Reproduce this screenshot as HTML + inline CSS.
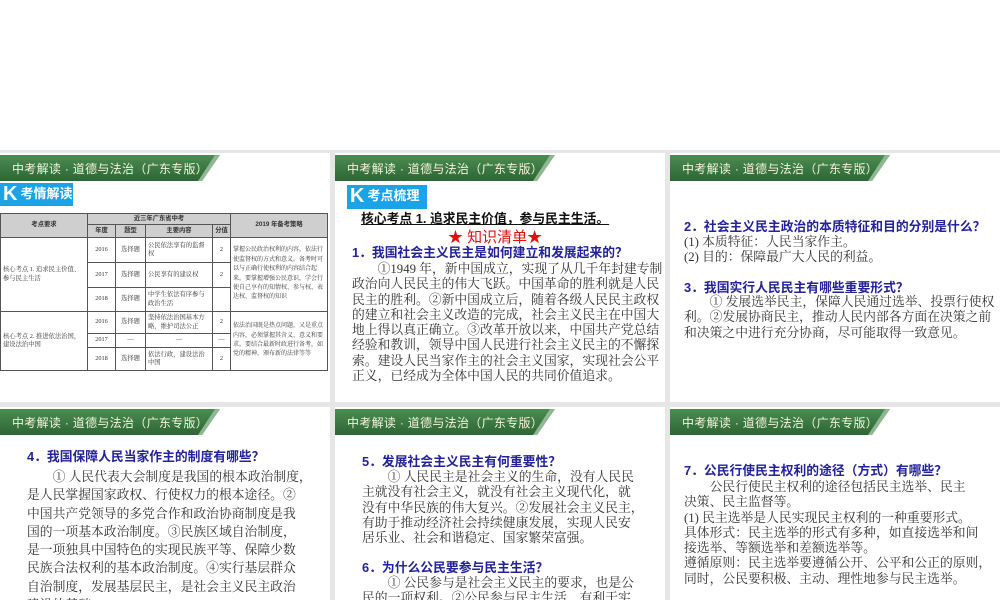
<!DOCTYPE html>
<html><head><meta charset="utf-8"><style>
*{margin:0;padding:0;box-sizing:border-box}
body{width:1000px;height:600px;overflow:hidden;background:#fff;position:relative;font-family:"Liberation Serif","Noto Serif CJK SC",serif;color:#333}
.bg{position:absolute;left:0;top:150px;width:1000px;height:450px;background:#e6e6e6}
.s{position:absolute;background:#fff;overflow:hidden}
.band{position:absolute;left:0;top:2px;width:222px;height:26px}
.band .t{position:absolute;left:12px;top:5px;font:12px "Liberation Sans","Noto Sans CJK SC",sans-serif;color:#f3f3dc;white-space:nowrap;letter-spacing:0.3px}
.k{position:absolute;background:#1aa3e6;color:#fff;font:bold 13px "Liberation Sans","Noto Sans CJK SC",sans-serif;white-space:nowrap;padding-left:3px}
.k b{font-size:20px;vertical-align:-2px;margin-right:3px}
.l{position:absolute;white-space:nowrap;font-size:12.8px;line-height:15.3px}
.q{color:#22229a;font-family:"Liberation Sans","Noto Sans CJK SC",sans-serif;font-weight:bold}
table{position:absolute;border-collapse:collapse;table-layout:fixed;font-size:6.3px;line-height:8.5px}
td{border:1px solid #555;padding:0 2px;vertical-align:middle;overflow:hidden}
.h td{background:#cfcfcf;text-align:center;font-weight:bold;font-family:"Liberation Sans","Noto Sans CJK SC",sans-serif}
.c{text-align:center}
.st{line-height:9.4px;font-size:6px}
</style></head><body>
<div class="bg"></div>

<div class="s" style="left:0;top:153px;width:330px;height:249px">
<svg class="band" viewBox="0 0 222 26"><defs><linearGradient id="g" x1="0" y1="0" x2="0" y2="1"><stop offset="0" stop-color="#4c8c52"/><stop offset="1" stop-color="#2c6634"/></linearGradient></defs><polygon points="0,0 220,0 202,26 0,26" fill="url(#g)"/><polygon points="215,0 220,0 202,26 198,26" fill="#8fb892"/></svg>
<div class="band"><div class="t">中考解读 · 道德与法治（广东专版）</div></div>
<div class="k" style="left:0;top:30px;width:73px;height:23px"><b>K</b>考情解读</div>
<table style="left:0;top:60px;width:327px">
<colgroup><col style="width:87px"><col style="width:28px"><col style="width:30px"><col style="width:67px"><col style="width:18px"><col style="width:97px"></colgroup>
<tr class="h" style="height:11px"><td rowspan="2">考点要求</td><td colspan="4">近三年广东省中考</td><td rowspan="2">2019 年备考策略</td></tr>
<tr class="h" style="height:13px"><td>年度</td><td>题型</td><td>主要内容</td><td style="padding:0">分值</td></tr>
<tr style="height:25px"><td rowspan="3">核心考点 1. 追求民主价值、参与民主生活</td><td class="c">2016</td><td class="c">选择题</td><td>公民依法享有的监督权</td><td class="c">2</td><td rowspan="3" class="st">掌握公民政治权利的内容，依法行使监督权的方式和意义。备考时可以与正确行使权利的内容结合起来。要掌握增强公民意识，学会行使自己享有的知情权、参与权、表达权、监督权的知识</td></tr>
<tr style="height:25px"><td class="c">2017</td><td class="c">选择题</td><td>公民享有的建议权</td><td class="c">2</td></tr>
<tr style="height:24px"><td class="c">2018</td><td class="c">选择题</td><td>中学生依法有序参与政治生活</td><td></td></tr>
<tr style="height:22px"><td rowspan="3">核心考点 2. 推进依法治国，建设法治中国</td><td class="c">2016</td><td class="c">选择题</td><td>坚持依法治国基本方略，维护司法公正</td><td class="c">2</td><td rowspan="3" class="st">依法治国既是热点问题，又是重点内容，必须掌握其含义、意义和要求。要结合最新时政进行备考，如党的精神，颁布新的法律等等</td></tr>
<tr style="height:14px"><td class="c">2017</td><td class="c">—</td><td class="c">—</td><td class="c">—</td></tr>
<tr style="height:23px"><td class="c">2018</td><td class="c">选择题</td><td>依法行政，建设法治中国</td><td class="c">2</td></tr>
</table>
</div>

<div class="s" style="left:335px;top:153px;width:330px;height:249px">
<svg class="band" viewBox="0 0 222 26"><polygon points="0,0 220,0 202,26 0,26" fill="url(#g)"/><polygon points="215,0 220,0 202,26 198,26" fill="#8fb892"/></svg>
<div class="band"><div class="t">中考解读 · 道德与法治（广东专版）</div></div>
<div class="k" style="left:12px;top:32px;width:80px;height:24px"><b>K</b>考点梳理</div>
<div class="l" style="left:26px;top:58px;font-weight:bold;color:#111;text-decoration:underline;font-family:'Liberation Sans','Noto Sans CJK SC',sans-serif">核心考点 1. 追求民主价值，参与民主生活。</div>
<div class="l" style="left:113px;top:76px;color:#e01010;font-size:15px;line-height:18px;font-family:'Liberation Sans','Noto Sans CJK SC',sans-serif">★ 知识清单★</div>
<div class="l q" style="left:17px;top:92px">1．我国社会主义民主是如何建立和发展起来的？</div>
<div class="l" style="left:17px;top:109px">　　①1949 年，新中国成立，实现了从几千年封建专制<br>政治向人民民主的伟大飞跃。中国革命的胜利就是人民<br>民主的胜利。②新中国成立后，随着各级人民民主政权<br>的建立和社会主义改造的完成，社会主义民主在中国大<br>地上得以真正确立。③改革开放以来，中国共产党总结<br>经验和教训，领导中国人民进行社会主义民主的不懈探<br>索。建设人民当家作主的社会主义国家，实现社会公平<br>正义，已经成为全体中国人民的共同价值追求。</div>
</div>

<div class="s" style="left:670px;top:153px;width:330px;height:249px">
<svg class="band" viewBox="0 0 222 26"><polygon points="0,0 220,0 202,26 0,26" fill="url(#g)"/><polygon points="215,0 220,0 202,26 198,26" fill="#8fb892"/></svg>
<div class="band"><div class="t">中考解读 · 道德与法治（广东专版）</div></div>
<div class="l q" style="left:14px;top:66px">2．社会主义民主政治的本质特征和目的分别是什么？</div>
<div class="l" style="left:14px;top:82px">(1) 本质特征：人民当家作主。<br>(2) 目的：保障最广大人民的利益。</div>
<div class="l q" style="left:14px;top:127px">3．我国实行人民民主有哪些重要形式？</div>
<div class="l" style="left:14px;top:142px">　　① 发展选举民主，保障人民通过选举、投票行使权<br>利。②发展协商民主，推动人民内部各方面在决策之前<br>和决策之中进行充分协商，尽可能取得一致意见。</div>
</div>

<div class="s" style="left:0;top:407px;width:330px;height:193px">
<svg class="band" viewBox="0 0 222 26"><polygon points="0,0 220,0 202,26 0,26" fill="url(#g)"/><polygon points="215,0 220,0 202,26 198,26" fill="#8fb892"/></svg>
<div class="band"><div class="t">中考解读 · 道德与法治（广东专版）</div></div>
<div class="l q" style="left:27px;top:42px">4．我国保障人民当家作主的制度有哪些？</div>
<div class="l" style="left:27px;top:61px;line-height:18.3px">　　① 人民代表大会制度是我国的根本政治制度，<br>是人民掌握国家政权、行使权力的根本途径。②<br>中国共产党领导的多党合作和政治协商制度是我<br>国的一项基本政治制度。③民族区域自治制度，<br>是一项独具中国特色的实现民族平等、保障少数<br>民族合法权利的基本政治制度。④实行基层群众<br>自治制度，发展基层民主，是社会主义民主政治<br>建设的基础。</div>
</div>

<div class="s" style="left:335px;top:407px;width:330px;height:193px">
<svg class="band" viewBox="0 0 222 26"><polygon points="0,0 220,0 202,26 0,26" fill="url(#g)"/><polygon points="215,0 220,0 202,26 198,26" fill="#8fb892"/></svg>
<div class="band"><div class="t">中考解读 · 道德与法治（广东专版）</div></div>
<div class="l q" style="left:27px;top:47px">5．发展社会主义民主有何重要性？</div>
<div class="l" style="left:27px;top:63px">　　① 人民民主是社会主义的生命，没有人民民<br>主就没有社会主义，就没有社会主义现代化，就<br>没有中华民族的伟大复兴。②发展社会主义民主，<br>有助于推动经济社会持续健康发展，实现人民安<br>居乐业、社会和谐稳定、国家繁荣富强。</div>
<div class="l q" style="left:27px;top:153px">6．为什么公民要参与民主生活？</div>
<div class="l" style="left:27px;top:169px">　　① 公民参与是社会主义民主的要求，也是公<br>民的一项权利。②公民参与民主生活，有利于实</div>
</div>

<div class="s" style="left:670px;top:407px;width:330px;height:193px">
<svg class="band" viewBox="0 0 222 26"><polygon points="0,0 220,0 202,26 0,26" fill="url(#g)"/><polygon points="215,0 220,0 202,26 198,26" fill="#8fb892"/></svg>
<div class="band"><div class="t">中考解读 · 道德与法治（广东专版）</div></div>
<div class="l q" style="left:14px;top:56px">7．公民行使民主权利的途径（方式）有哪些？</div>
<div class="l" style="left:14px;top:73px">　　公民行使民主权利的途径包括民主选举、民主<br>决策、民主监督等。<br>(1) 民主选举是人民实现民主权利的一种重要形式。<br>具体形式：民主选举的形式有多种，如直接选举和间<br>接选举、等额选举和差额选举等。<br>遵循原则：民主选举要遵循公开、公平和公正的原则，<br>同时，公民要积极、主动、理性地参与民主选举。</div>
</div>
</body></html>
